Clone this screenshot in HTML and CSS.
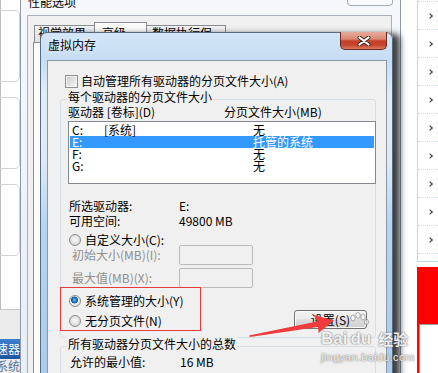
FILE: index.html
```
<!DOCTYPE html>
<html lang="zh-CN">
<head>
    <meta charset="UTF-8">
    <meta name="viewport" content="width=device-width, initial-scale=1.0">
    <title>虚拟内存</title>
    <link rel="stylesheet" href="styles.css">
</head>
<body>
    <div class="desktop">
        <div class="app-left">
            <div class="app-main">
                <div class="app-card"></div>
                <div class="app-card"></div>
                <div class="app-card"></div>
            </div>
            <div class="app-foot">
                <div class="app-btn"><span>一键加速器</span></div>
                <div class="app-link"><span>修复系统</span></div>
            </div>
        </div>

        <div class="window perf">
            <div class="perf-title">
                <span class="perf-title-text">性能选项</span>
                <span class="perf-close"></span>
            </div>
            <div class="perf-client">
                <div class="tabs">
                    <span class="tab">视觉效果</span>
                    <span class="tab active">高级</span>
                    <span class="tab">数据执行保护</span>
                </div>
                <div class="tab-panel"></div>
            </div>
        </div>

        <div class="side-list">
            <div class="side-box">
                <div class="side-row"><span class="chev"></span></div>
                <div class="side-row"><span class="chev"></span></div>
                <div class="side-row"><span class="chev"></span></div>
                <div class="side-row"><span class="chev"></span></div>
                <div class="side-row"><span class="chev"></span></div>
                <div class="side-row"><span class="chev"></span></div>
                <div class="side-row"><span class="chev"></span></div>
                <div class="side-row"><span class="chev"></span></div>
                <div class="side-row"><span class="chev"></span></div>
                <div class="side-end"></div>
            </div>
            <div class="side-red">
                <div class="side-red-inner"></div>
            </div>
        </div>

        <div class="window vm">
            <div class="vm-title">
                <span class="vm-title-text">虚拟内存</span>
                <span class="vm-close">
                    <svg width="14" height="10" viewBox="0 0 14 10">
                        <path d="M2.5 1.5 L11.5 8.5 M11.5 1.5 L2.5 8.5" stroke="#3b2420" stroke-width="4" stroke-linecap="round"/>
                        <path d="M2.5 1.5 L11.5 8.5 M11.5 1.5 L2.5 8.5" stroke="#fff" stroke-width="2.2" stroke-linecap="round"/>
                    </svg>
                </span>
            </div>
            <div class="vm-client">
                <label class="check-row">
                    <span class="checkbox"></span>
                    <span>自动管理所有驱动器的分页文件大小(A)</span>
                </label>

                <div class="group">
                    <div class="group-title">每个驱动器的分页文件大小</div>
                    <div class="list-head">
                        <span>驱动器 [卷标](D)</span>
                        <span>分页文件大小(MB)</span>
                    </div>
                    <div class="listbox">
                        <div class="lb-row"><span>C:</span><span>[系统]</span><span>无</span></div>
                        <div class="lb-row selected"><span>E:</span><span></span><span>托管的系统</span></div>
                        <div class="lb-row"><span>F:</span><span></span><span>无</span></div>
                        <div class="lb-row"><span>G:</span><span></span><span>无</span></div>
                    </div>

                    <div class="drive-info">
                        <span>所选驱动器:</span><span>E:</span>
                        <span>可用空间:</span><span>49800 MB</span>
                    </div>

                    <div class="radio-row custom">
                        <span class="radio"></span>
                        <span>自定义大小(C):</span>
                    </div>
                    <div class="size-row first">
                        <span>初始大小(MB)(I):</span>
                        <span class="textbox"></span>
                    </div>
                    <div class="size-row">
                        <span>最大值(MB)(X):</span>
                        <span class="textbox"></span>
                    </div>

                    <div class="choice-row">
                        <div class="mark-box">
                            <div class="radio-row">
                                <span class="radio on"></span>
                                <span>系统管理的大小(Y)</span>
                            </div>
                            <div class="radio-row">
                                <span class="radio"></span>
                                <span>无分页文件(N)</span>
                            </div>
                        </div>
                        <button class="btn" type="button">设置(S)</button>
                    </div>
                </div>

                <div class="group total">
                    <div class="group-title">所有驱动器分页文件大小的总数</div>
                    <div class="total-row">
                        <span>允许的最小值:</span><span>16 MB</span>
                    </div>
                </div>
            </div>
        </div>

        <svg class="annot-arrow" width="438" height="373" viewBox="0 0 438 373">
            <polygon points="249,335.5 317,321.5 314,315 334,320.5 318.5,333 318,327 250,337" fill="#ef3b3b"/>
        </svg>

        <div class="watermark">
            <div class="wm-logo">
                <span class="wm-bai">Bai</span>
                <span class="wm-du">
                    <svg class="wm-paw" width="22" height="20" viewBox="0 0 22 20">
                        <g fill="rgba(255,255,255,0.6)" stroke="rgba(120,120,120,0.6)" stroke-width="1">
                            <ellipse cx="5" cy="6" rx="2.2" ry="3"/>
                            <ellipse cx="10" cy="3.5" rx="2.2" ry="3"/>
                            <ellipse cx="15" cy="5" rx="2.2" ry="3"/>
                            <ellipse cx="18.5" cy="10" rx="2" ry="2.6"/>
                        </g>
                    </svg>
                    du
                </span>
                <span class="wm-jy">经验</span>
            </div>
            <div class="wm-url">jingyan.baidu.com</div>
        </div>
    </div>
</body>
</html>
```

FILE: styles.css
```
body {
    margin: 0;
    font-family: "Noto Sans CJK SC", "Liberation Sans", sans-serif;
    font-size: 12px;
    line-height: 14px;
    color: #000;
    overflow: hidden;
}
.desktop {
    position: relative;
    width: 438px;
    height: 373px;
    overflow: hidden;
    background: #fff;
}

/* left application strip */
.app-left {
    position: absolute;
    left: 0;
    top: 0;
    width: 20px;
    height: 373px;
    overflow: hidden;
    display: flex;
    flex-direction: column;
    background: #fff;
}
.app-main {
    height: 310px;
    box-sizing: border-box;
    border-left: 1px solid #bdbdbd;
    padding-top: 10px;
    display: flex;
    flex-direction: column;
    gap: 15px;
}
.app-card {
    width: 30px;
    height: 70px;
    margin-left: -13px;
    border: 1px solid #d2d2d2;
    border-radius: 5px;
    flex-shrink: 0;
}
.app-foot {
    flex: 1;
    background: #ececec;
    border-top: 1px solid #c6c6c6;
    padding-top: 29px;
}
.app-btn, .app-link {
    display: flex;
    justify-content: flex-end;
    overflow: hidden;
    white-space: nowrap;
}
.app-btn {
    height: 20px;
    line-height: 20px;
    background: linear-gradient(#3b80cf, #1c56a2);
    color: #fff;
}
.app-link {
    line-height: 14px;
    color: #55739a;
}

/* background window: 性能选项 */
.window {
    position: absolute;
    box-sizing: border-box;
}
.perf {
    left: 20px;
    top: -14px;
    width: 381px;
    height: 400px;
    border: 1px solid #8c99a8;
    border-radius: 6px;
    background: linear-gradient(to bottom, #f6f8fb, #e8eef5);
    padding: 0 8px 0 6px;
}
.perf-title {
    height: 28px;
    display: flex;
    align-items: flex-start;
}
.perf-title-text {
    margin: 8px 0 0 1px;
}
.perf-close {
    margin-left: auto;
    margin-right: -1px;
    width: 46px;
    height: 19px;
    box-sizing: border-box;
    border: 1px solid #a5b0bd;
    border-top: none;
    border-radius: 0 0 4px 4px;
    background: #f7f9fb;
}
.perf-client {
    height: 380px;
    background: #f0f0f0;
    border: 1px solid #a7b1bd;
    padding: 6px 0 0 5px;
}
.tabs {
    display: flex;
    align-items: flex-end;
    height: 20px;
    padding-left: 1px;
}
.tab {
    height: 17px;
    box-sizing: border-box;
    border: 1px solid #898c95;
    border-bottom: none;
    background: linear-gradient(#f2f2f2, #e3e3e3);
    padding: 0 3px;
    line-height: 14px;
    margin-right: -1px;
}
.tab:first-child {
    width: 61px;
}
.tab.active {
    height: 20px;
    width: 53px;
    background: #fbfbfb;
    padding-left: 7px;
    padding-top: 3px;
}
.tab:last-child {
    width: 80px;
    padding-left: 5px;
}
.tab-panel {
    height: 340px;
    border: 1px solid #898c95;
    background: #fcfcfc;
}

/* right list strip */
.side-list {
    position: absolute;
    left: 401px;
    top: 0;
    width: 37px;
    height: 373px;
    background: #fff;
}
.side-box {
    margin-left: 16px;
    height: 262px;
    box-sizing: border-box;
    border-left: 1px solid #b7dbeb;
    border-bottom: 1px solid #b7dbeb;
    padding-top: 1px;
}
.side-row {
    height: 28px;
    box-sizing: border-box;
    border-top: 1px dotted #c3e0f1;
    display: flex;
    align-items: center;
    padding-left: 10px;
}
.side-end {
    border-top: 1px dotted #c3e0f1;
}
.chev {
    width: 3px;
    height: 3px;
    border-top: 1.5px solid #333;
    border-right: 1.5px solid #333;
    transform: rotate(45deg);
}
.side-red {
    margin: 5px 0 0 16px;
    height: 110px;
    background: #ff0000;
    padding-top: 57px;
    box-sizing: border-box;
}
.side-red-inner {
    margin-left: 2px;
    height: 60px;
    background: #fff;
    border-top: 1px solid #9a9a9a;
    border-left: 1px solid #9a9a9a;
}

/* front dialog: 虚拟内存 */
.vm {
    left: 40px;
    top: 32px;
    width: 353px;
    height: 360px;
    border: 1px solid #5a6b80;
    border-radius: 7px 7px 0 0;
    background: linear-gradient(to bottom, #d3e5f7 0, #c6ddf3 27px, #e2ecf6 60px, #dde9f5 130px, #b7d5f0 190px, #a8caec 100%);
    padding: 0 5px 0 6px;
    box-shadow: 9px 0 6px -2px rgba(0, 0, 0, 0.75);
}
.vm-title {
    height: 27px;
    display: flex;
    align-items: flex-start;
}
.vm-title-text {
    margin: 5px 0 0 1px;
    text-shadow: 0 0 6px rgba(255, 255, 255, 0.9);
}
.vm-close {
    margin-left: auto;
    margin-top: -1px;
    width: 47px;
    height: 18px;
    box-sizing: border-box;
    border: 1px solid #6a2b24;
    border-top: none;
    border-radius: 0 0 5px 5px;
    background: linear-gradient(#e6ab9b 0%, #d98872 42%, #c5412b 52%, #c4432c 75%, #e07a5c 100%);
    display: flex;
    align-items: center;
    justify-content: center;
}
.vm-client {
    height: 330px;
    background: #f0f0f0;
    border: 1px solid #8a97a6;
    border-bottom: none;
}
.check-row {
    display: flex;
    align-items: center;
    gap: 3px;
    height: 14px;
    margin-top: 13px;
    padding-left: 17px;
}
.checkbox {
    width: 13px;
    height: 13px;
    box-sizing: border-box;
    border: 1px solid #8e8f8f;
    background: linear-gradient(135deg, #cbcbcb, #f7f7f7);
    box-shadow: inset 0 0 0 1px #f4f4f4;
}
.group {
    margin: 11px 10px 0 12px;
    border: 1px solid #d5dfe5;
    border-radius: 3px;
    padding-bottom: 6px;
}
.group-title {
    width: fit-content;
    margin: -10px 0 0 6px;
    padding: 0 1px;
    background: #f0f0f0;
}
.list-head {
    display: grid;
    grid-template-columns: 156px 1fr;
    margin-top: 1px;
    padding-left: 7px;
}
.listbox {
    margin: 2px -1px 0 7px;
    height: 63px;
    box-sizing: border-box;
    border: 1px solid #828790;
    background: #fff;
    padding: 2px 1px;
}
.lb-row {
    display: grid;
    grid-template-columns: 32px 149px 1fr;
    height: 12px;
    line-height: 12px;
    padding-left: 2px;
}
.lb-row.selected {
    background: #3399ff;
    color: #fff;
}
.drive-info {
    display: grid;
    grid-template-columns: 110px 1fr;
    margin: 14px 0 0 8px;
    line-height: 15px;
}
.radio-row {
    display: flex;
    align-items: center;
    gap: 4px;
    height: 14px;
}
.radio-row.custom {
    margin-top: 5px;
    padding-left: 8px;
}
.radio {
    width: 12px;
    height: 12px;
    box-sizing: border-box;
    border-radius: 50%;
    border: 1px solid #8b8c8c;
    background: radial-gradient(circle at 50% 45%, #f7f7f7 0, #e9e9e9 3px, #d0d0d0 6px);
}
.radio.on {
    background: radial-gradient(circle at 45% 40%, #8ccaf5 0, #2d85d3 1.6px, #145a9e 3.2px, #f2f2f2 3.8px, #dedede 6px);
}
.size-row {
    display: grid;
    grid-template-columns: 107px 74px;
    align-items: center;
    height: 20px;
    margin-top: 3px;
    padding-left: 11px;
    color: #8f8f8f;
}
.size-row.first {
    margin-top: -2px;
}
.textbox {
    height: 20px;
    box-sizing: border-box;
    border: 1px solid #b9b9b9;
    border-radius: 2px;
    background: #f0f0f0;
}
.choice-row {
    display: flex;
    margin-top: -1px;
}
.mark-box {
    margin-left: -1px;
    width: 141px;
    height: 44px;
    box-sizing: border-box;
    border: 1px solid #e8393c;
    padding: 6px 0 0 8px;
    display: flex;
    flex-direction: column;
    gap: 6px;
}
.btn {
    align-self: flex-end;
    margin: 0 8px 2px auto;
    width: 73px;
    height: 19px;
    padding: 0;
    box-sizing: border-box;
    border: 1px solid #707070;
    border-radius: 3px;
    background: linear-gradient(#f3f3f3 0%, #ebebeb 48%, #dcdcdc 52%, #cfcfcf 100%);
    box-shadow: inset 0 0 0 1px #fbfbfb;
    font-family: inherit;
    font-size: 12px;
    line-height: 16px;
    color: #000;
}
.group.total {
    margin-top: 8px;
    height: 60px;
}
.total-row {
    display: grid;
    grid-template-columns: 110px 1fr;
    margin-top: 4px;
    padding-left: 9px;
}

/* annotation overlays */
.annot-arrow {
    position: absolute;
    left: 0;
    top: 0;
    pointer-events: none;
}
.watermark {
    position: absolute;
    left: 321px;
    top: 330px;
    color: rgba(255, 255, 255, 0.92);
    text-shadow: 0 0 1px rgba(80, 80, 80, 0.8), 0 0 2px rgba(80, 80, 80, 0.5);
    pointer-events: none;
}
.wm-logo {
    display: flex;
    align-items: flex-end;
    font-family: "Liberation Sans", "Noto Sans CJK SC", sans-serif;
    font-weight: bold;
    font-size: 17px;
    line-height: 18px;
}
.wm-du {
    position: relative;
    margin-left: 3px;
}
.wm-paw {
    position: absolute;
    left: -2px;
    top: -18px;
}
.wm-jy {
    margin-left: 7px;
    font-family: "Noto Sans CJK SC", sans-serif;
    font-size: 15px;
}
.wm-url {
    margin-top: 3px;
    font-family: "Liberation Sans", sans-serif;
    font-size: 11px;
    line-height: 12px;
    letter-spacing: 0.3px;
}
```
